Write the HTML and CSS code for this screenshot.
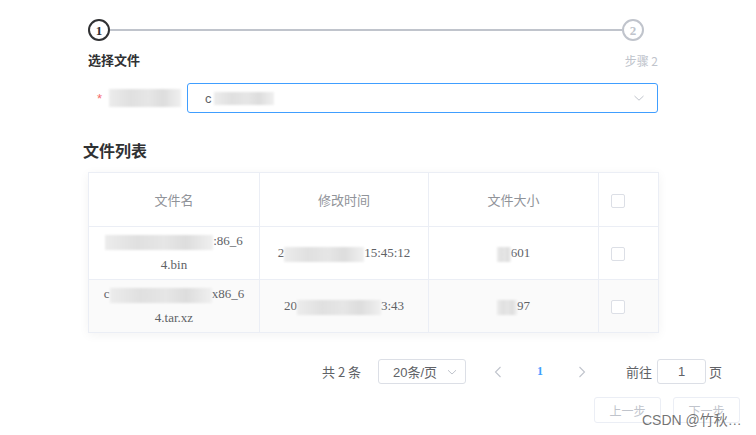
FILE: index.html
```html
<!DOCTYPE html>
<html lang="zh-CN">
<head>
<meta charset="utf-8">
<title>选择文件</title>
<link rel="stylesheet" href="styles.css">
</head>
<body>
<div class="page">
  <div class="steps">
    <div class="step-icon active">1</div>
    <div class="step-line"></div>
    <div class="step-icon wait">2</div>
  </div>
  <div class="step-titles">
    <span class="step-title active">选择文件</span>
    <span class="step-title wait">步骤 2</span>
  </div>

  <div class="form-row">
    <label class="form-label"><span class="req">*</span><span class="blur blur-label"></span></label>
    <div class="select focus">
      <span class="select-text">c<span class="blur blur-sel"></span></span>
      <svg class="chev" width="12" height="12" viewBox="0 0 12 12"><path d="M1.5 4 L6 8.2 L10.5 4" fill="none" stroke="#c0c4cc" stroke-width="1"/></svg>
    </div>
  </div>

  <h2 class="section-title">文件列表</h2>

  <table class="table">
    <colgroup>
      <col class="c1"><col class="c2"><col class="c3"><col class="c4">
    </colgroup>
    <thead>
      <tr>
        <th>文件名</th>
        <th>修改时间</th>
        <th>文件大小</th>
        <th class="sel"><span class="checkbox"></span></th>
      </tr>
    </thead>
    <tbody>
      <tr>
        <td class="data"><span class="blur blur-n1"></span>:86_6<br>4.bin</td>
        <td class="data">2<span class="blur blur-t1"></span>15:45:12</td>
        <td class="data"><span class="blur blur-s1"></span>601</td>
        <td class="sel"><span class="checkbox"></span></td>
      </tr>
      <tr class="striped">
        <td class="data">c<span class="blur blur-n2"></span>x86_6<br>4.tar.xz</td>
        <td class="data">20<span class="blur blur-t2"></span>3:43</td>
        <td class="data"><span class="blur blur-s2"></span>97</td>
        <td class="sel"><span class="checkbox"></span></td>
      </tr>
    </tbody>
  </table>

  <div class="pagination">
    <span class="total">共 2 条</span>
    <div class="pg-select">
      <span>20条/页</span>
      <svg width="10" height="10" viewBox="0 0 10 10"><path d="M1 3.2 L5 7 L9 3.2" fill="none" stroke="#c0c4cc" stroke-width="1"/></svg>
    </div>
    <span class="pg-btn prev"><svg width="8" height="12" viewBox="0 0 8 12"><path d="M6.5 1 L1.5 6 L6.5 11" fill="none" stroke="#c0c4cc" stroke-width="1.1"/></svg></span>
    <span class="pg-num">1</span>
    <span class="pg-btn next"><svg width="8" height="12" viewBox="0 0 8 12"><path d="M1.5 1 L6.5 6 L1.5 11" fill="none" stroke="#c0c4cc" stroke-width="1.1"/></svg></span>
    <span class="jump">前往</span>
    <div class="pg-input">1</div>
    <span class="jump-end">页</span>
  </div>

  <div class="actions">
    <button class="btn" disabled>上一步</button>
    <button class="btn" disabled>下一步</button>
  </div>
  <div class="watermark">CSDN @竹秋…</div>
</div>
</body>
</html>
```

FILE: styles.css
```css
* { box-sizing: border-box; }
html, body { margin: 0; padding: 0; background: #fff; }
body {
  font-family: "Liberation Sans", "Noto Sans CJK SC", sans-serif;
  color: #606266;
  font-size: 13px;
  width: 756px;
  height: 435px;
  overflow: hidden;
}
.page {
  position: relative;
  padding-top: 19px;
  height: 435px;
}

/* steps */
.steps {
  margin-left: 88px;
  width: 556px;
  display: flex;
  align-items: center;
  height: 22px;
}
.step-icon {
  width: 22px;
  height: 22px;
  border-radius: 50%;
  border: 2px solid #303133;
  color: #303133;
  font-family: "Liberation Serif", serif;
  font-weight: bold;
  font-size: 13px;
  display: flex;
  align-items: center;
  justify-content: center;
  line-height: 1;
  flex: none;
}
.step-icon.wait { border-color: #c0c4cc; color: #c0c4cc; }
.step-line {
  flex: 1;
  height: 2px;
  background: #c0c4cc;
}
.step-titles {
  margin: 10px 0 0 88px;
  width: 570px;
  display: flex;
  justify-content: space-between;
  line-height: 20px;
}
.step-title.active { color: #303133; font-weight: bold; font-size: 13px; }
.step-title.wait { color: #c0c4cc; font-size: 12px; font-family: "Noto Sans CJK SC", sans-serif; }

/* form */
.form-row {
  margin: 12px 0 0 88px;
  width: 570px;
  display: flex;
  align-items: center;
  height: 30px;
}
.form-label {
  width: 99px;
  display: flex;
  align-items: center;
  padding-left: 9px;
}
.req { color: #f56c6c; margin-right: 7px; font-size: 13px; }
.blur {
  display: inline-block;
  height: 15px;
  vertical-align: middle;
  background: linear-gradient(90deg, #ececec 0%, #e0e0e0 30%, #e6e6e6 55%, #dddddd 75%, #f0f0f0 100%);
  filter: blur(0.8px);
}
.blur-label { width: 72px; height: 18px; }
.select {
  flex: 1;
  height: 30px;
  border: 1px solid #409eff;
  border-radius: 3px;
  display: flex;
  align-items: center;
  justify-content: space-between;
  padding: 0 12px 0 17px;
}
.select-text { color: #606266; font-size: 13px; display: flex; align-items: center; }
.blur-sel { width: 60px; height: 13px; margin-left: 2px; }
.chev { flex: none; }

/* section */
.section-title {
  margin: 28px 0 0 83px;
  font-size: 16px;
  line-height: 22px;
  font-weight: bold;
  color: #303133;
}

/* table */
.table {
  margin: 9px 0 0 88px;
  width: 570px;
  border-collapse: collapse;
  table-layout: fixed;
  border: 1px solid #ebeef5;
  box-shadow: 0 2px 10px rgba(0, 0, 0, 0.05);
}
.c1 { width: 171px; }
.c2 { width: 169px; }
.c3 { width: 170px; }
.c4 { width: 60px; }
.table th, .table td {
  border: 1px solid #ebeef5;
  text-align: center;
  padding: 0 10px;
}
.table th {
  height: 54px;
  color: #909399;
  font-weight: normal;
  font-family: "Noto Sans CJK SC", sans-serif;
  font-size: 13px;
}
.table td { height: 53px; }
.table td.data {
  font-family: "Liberation Serif", "Noto Sans CJK SC", serif;
  font-size: 13px;
  color: #606266;
  line-height: 24px;
}
.striped td { background: #fafafa; }
.table .sel { text-align: left; padding-left: 12px; }
.checkbox {
  display: inline-block;
  width: 14px;
  height: 14px;
  border: 1px solid #dcdfe6;
  border-radius: 2px;
  background: #fff;
  vertical-align: middle;
}
.blur-n1 { width: 108px; }
.blur-n2 { width: 102px; }
.blur-t1 { width: 80px; }
.blur-t2 { width: 84px; }
.blur-s1 { width: 14px; }
.blur-s2 { width: 20px; }

/* pagination */
.pagination {
  margin: 26px 0 0 322px;
  display: flex;
  align-items: center;
  height: 25px;
  font-size: 13px;
  color: #606266;
  white-space: nowrap;
}
.total { width: 38px; font-family: "Noto Sans CJK SC", sans-serif; }
.pg-select {
  margin-left: 18px;
  width: 88px;
  height: 25px;
  border: 1px solid #dcdfe6;
  border-radius: 3px;
  display: flex;
  align-items: center;
  justify-content: space-between;
  padding: 0 8px 0 14px;
  color: #606266;
}
.pg-btn {
  width: 8px;
  display: flex;
  align-items: center;
}
.pg-btn.prev { margin-left: 28px; }
.pg-num {
  margin-left: 35px;
  width: 4px;
  color: #409eff;
  font-weight: bold;
  font-family: "Liberation Serif", serif;
  font-size: 12px;
}
.pg-btn.next { margin-left: 37px; }
.jump { margin-left: 40px; font-family: "Noto Sans CJK SC", sans-serif; }
.pg-input {
  margin-left: 5px;
  width: 49px;
  height: 25px;
  border: 1px solid #dcdfe6;
  border-radius: 3px;
  display: flex;
  align-items: center;
  justify-content: center;
  color: #606266;
}
.jump-end { margin-left: 3px; font-family: "Noto Sans CJK SC", sans-serif; }

/* actions */
.actions {
  margin: 13px 0 0 594px;
  display: flex;
  gap: 12px;
}
.btn {
  width: 67px;
  height: 26px;
  border: 1px solid #ebeef5;
  border-radius: 3px;
  background: #fff;
  color: #c0c4cc;
  font-family: "Noto Sans CJK SC", sans-serif;
  font-size: 12px;
  padding: 0;
}
.watermark {
  position: absolute;
  left: 642px;
  top: 409px;
  font-family: "Liberation Sans", "Noto Sans CJK SC", sans-serif;
  font-size: 14px;
  color: rgba(90, 90, 90, 0.85);
  white-space: nowrap;
}
```
